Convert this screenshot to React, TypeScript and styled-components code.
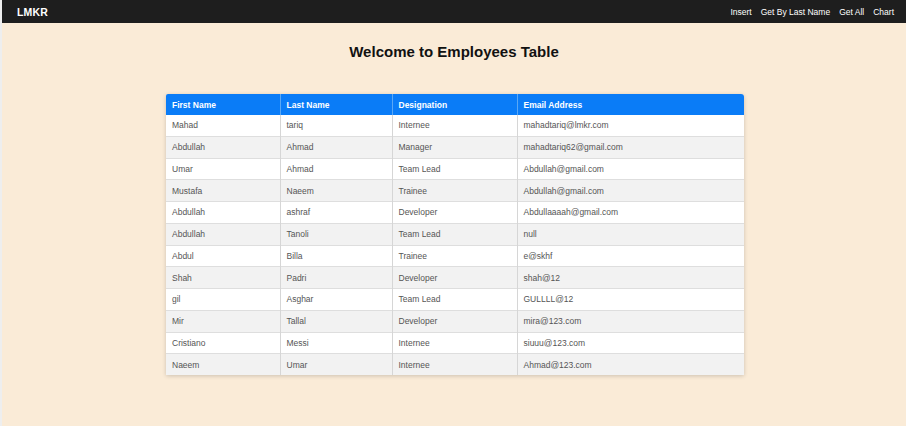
import React from "react";
import styled, { createGlobalStyle } from "styled-components";

const GlobalStyle = createGlobalStyle`
  html, body { margin: 0; padding: 0; height: 100%; }
  body {
    font-family: "Liberation Sans", Arial, sans-serif;
    background: #eeeeee;
  }
  #root { height: 100%; }
`;

const Page = styled.div`
  margin-left: 2px;
  min-height: 426px;
  background: #faebd7;
  display: flex;
  flex-direction: column;
`;

const NavBar = styled.nav`
  height: 23px;
  background: #1e1e1e;
  display: flex;
  align-items: center;
  justify-content: space-between;
  padding: 0 12px 0 15px;
  box-sizing: border-box;
`;

const Brand = styled.div`
  color: #ffffff;
  font-weight: bold;
  font-size: 10.5px;
  letter-spacing: 0.2px;
`;

const NavLinks = styled.div`
  display: flex;
  gap: 9px;
`;

const NavLink = styled.a`
  color: #ffffff;
  font-size: 8.5px;
  text-decoration: none;
`;

const Title = styled.h1`
  margin: 20px 0 0;
  text-align: center;
  font-size: 15px;
  font-weight: bold;
  color: #111;
  line-height: 17px;
`;

const TableWrap = styled.div`
  width: 578px;
  margin: 34px 0 0 164px;
  box-shadow: 0 1px 4px rgba(0, 0, 0, 0.18);
  border-radius: 2px 3px 0 0;
  overflow: hidden;
`;

const Table = styled.table`
  width: 578px;
  border-collapse: collapse;
  table-layout: fixed;
`;

const HeadCell = styled.th`
  background: #0a7cf7;
  color: #ffffff;
  font-size: 8.5px;
  font-weight: bold;
  text-align: left;
  padding: 0 6px;
  height: 21px;
  border-left: 1px solid #5aa8f5;
  &:first-child { border-left: none; }
`;

const Row = styled.tr<{ $alt: boolean }>`
  background: ${(p) => (p.$alt ? "#f2f2f2" : "#ffffff")};
  border-bottom: 1px solid #dedede;
  &:last-child { border-bottom: none; }
`;

const Cell = styled.td`
  font-size: 8.5px;
  color: #555;
  padding: 0 6px;
  height: 20.75px;
  border-left: 1px solid #d6d6d6;
  &:first-child { border-left: none; }
  white-space: nowrap;
`;

const rows: [string, string, string, string][] = [
  ["Mahad", "tariq", "Internee", "mahadtariq@lmkr.com"],
  ["Abdullah", "Ahmad", "Manager", "mahadtariq62@gmail.com"],
  ["Umar", "Ahmad", "Team Lead", "Abdullah@gmail.com"],
  ["Mustafa", "Naeem", "Trainee", "Abdullah@gmail.com"],
  ["Abdullah", "ashraf", "Developer", "Abdullaaaah@gmail.com"],
  ["Abdullah", "Tanoli", "Team Lead", "null"],
  ["Abdul", "Billa", "Trainee", "e@skhf"],
  ["Shah", "Padri", "Developer", "shah@12"],
  ["gil", "Asghar", "Team Lead", "GULLLL@12"],
  ["Mir", "Tallal", "Developer", "mira@123.com"],
  ["Cristiano", "Messi", "Internee", "siuuu@123.com"],
  ["Naeem", "Umar", "Internee", "Ahmad@123.com"],
];

const headers: [string, number][] = [
  ["First Name", 114],
  ["Last Name", 112],
  ["Designation", 125],
  ["Email Address", 227],
];

export default function App() {
  return (
    <>
      <GlobalStyle />
      <Page>
        <NavBar>
          <Brand>LMKR</Brand>
          <NavLinks>
            <NavLink>Insert</NavLink>
            <NavLink>Get By Last Name</NavLink>
            <NavLink>Get All</NavLink>
            <NavLink>Chart</NavLink>
          </NavLinks>
        </NavBar>
        <Title>Welcome to Employees Table</Title>
        <TableWrap>
          <Table>
            <colgroup>
              {headers.map(([h, w]) => (
                <col key={h} style={{ width: w }} />
              ))}
            </colgroup>
            <thead>
              <tr>
                {headers.map(([h]) => (
                  <HeadCell key={h}>{h}</HeadCell>
                ))}
              </tr>
            </thead>
            <tbody>
              {rows.map((r, i) => (
                <Row key={i} $alt={i % 2 === 1}>
                  {r.map((c, j) => (
                    <Cell key={j}>{c}</Cell>
                  ))}
                </Row>
              ))}
            </tbody>
          </Table>
        </TableWrap>
      </Page>
    </>
  );
}
